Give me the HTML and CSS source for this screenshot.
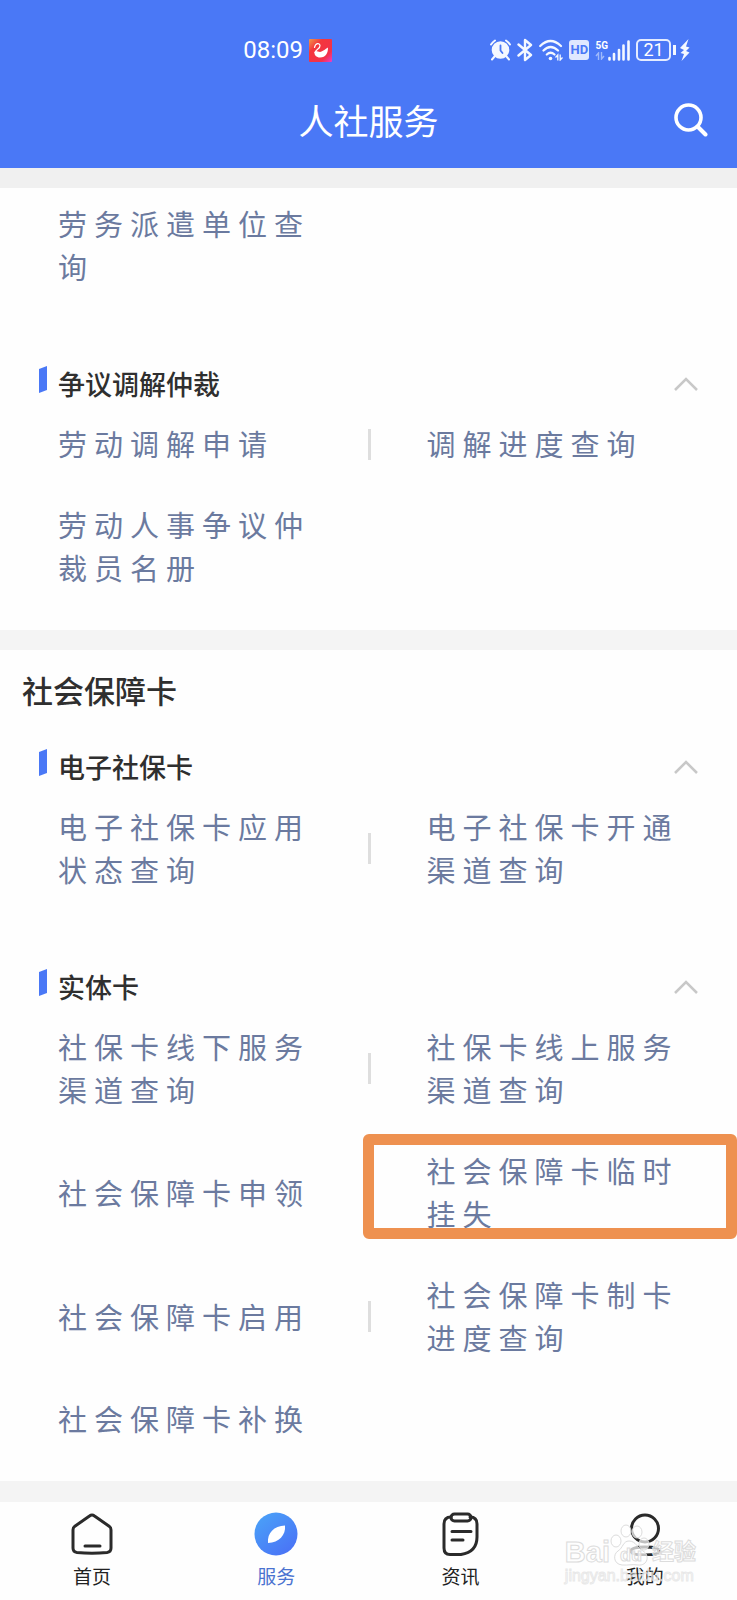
FILE: index.html
```html
<!DOCTYPE html>
<html lang="zh-CN">

<head>
    <meta charset="UTF-8">
    <meta name="viewport" content="width=device-width, initial-scale=1">
    <title>人社服务</title>
    <link rel="stylesheet" href="styles.css">
</head>
<body>
<header class="header">
    <div class="status">
        <div class="status-left">
            <span class="time">08:09</span>
            <svg width="23" height="23" viewBox="0 0 23 23">
                <defs>
                    <linearGradient id="swan" x1="0" y1="0" x2="1" y2="1">
                        <stop offset="0" stop-color="#f09a4c"/>
                        <stop offset=".3" stop-color="#f4373c"/>
                        <stop offset=".75" stop-color="#f2304a"/>
                        <stop offset="1" stop-color="#f03cc8"/>
                    </linearGradient>
                </defs>
                <rect width="23" height="23" rx="1" fill="url(#swan)"/>
                <path d="M5.500 8.500C6.500 4 10.500 3.500 11 6.500C11.500 9.500 6.500 10.500 6 13.500" fill="none" stroke="#fff" stroke-width="1.200" stroke-linecap="round"/>
                <path d="M5.500 13C7 10.500 10 14 12.500 12.500C14.500 11.500 16 10.500 19 8.500C19 14 17 18.500 11 18.500C7.500 18.500 5 16 5.500 13Z" fill="#fff"/>
            </svg>
        </div>
        <div class="status-right">
            <svg width="21" height="22" viewBox="0 0 21 22">
                <circle cx="10.500" cy="11" r="8.800" fill="#f4f8ff"/>
                <path d="M1 5.500A14 14 0 0 1 5 1.500M20 5.500A14 14 0 0 0 16 1.500M4.500 17.500L2 20.500M16.500 17.500L19 20.500" fill="none" stroke="#f4f8ff" stroke-width="2" stroke-linecap="round"/>
                <path d="M10.500 6.500V11.500L12.500 14" fill="none" stroke="#4a78f6" stroke-width="1.800" stroke-linecap="round"/>
            </svg>
            <svg width="16" height="24" viewBox="0 0 16 24">
                <path d="M1.500 6.500L14 17L8 22V2L14 7L1.500 17.500" fill="none" stroke="#f4f8ff" stroke-width="2.400" stroke-linejoin="round" stroke-linecap="round"/>
            </svg>
            <svg width="24" height="22" viewBox="0 0 24 22">
                <path d="M1.200 7Q11.500 -3 22 7M4.500 11.500Q11.500 4.500 19 11.500M7.800 15.500Q11.500 12 15.500 15.500" fill="none" stroke="#f4f8ff" stroke-width="2.200" stroke-linecap="round"/>
                <circle cx="11.500" cy="19.500" r="1.800" fill="#f4f8ff"/>
                <path d="M18.800 21.500V16L16.500 18.500M21.200 15.500V21L23.500 18.500" fill="none" stroke="#f4f8ff" stroke-width="1.300"/>
            </svg>
            <span class="hd">HD</span>
            <div class="signal">
                <div class="net">
                    <span>5G</span>
                    <svg width="10" height="8" viewBox="0 0 10 8">
                        <path d="M3.500 8V1L1 4M6.500 0V7L9 4" fill="none" stroke="#9fb9fb" stroke-width="1.400"/>
                    </svg>
                </div>
                <svg width="22" height="21" viewBox="0 0 22 21">
                    <path d="M1.500 18V19.500M6 14V19.500M11 10V19.500M15.500 5.500V19.500M20.500 1.500V19.500" stroke="#f4f8ff" stroke-width="2.600" stroke-linecap="round"/>
                </svg>
            </div>
            <div class="battery">
                <span>21</span>
                <i></i>
                <svg width="10" height="22" viewBox="0 0 10 22">
                    <path d="M8.500 0L0 9L4 11L0.500 14L4 15L1.500 22L9.500 13.500L6 12L9.500 8.500L6 7.500Z" fill="#f4f8ff"/>
                </svg>
            </div>
        </div>
    </div>
    <div class="titlebar">
        <h1>人社服务</h1>
        <button class="search" aria-label="搜索">
            <svg width="34" height="34" viewBox="0 0 34 34">
                <circle cx="14.500" cy="14.500" r="12.500" fill="none" stroke="#fff" stroke-width="3.600"/>
                <path d="M23.500 23.500L31.500 31.500" stroke="#fff" stroke-width="4" stroke-linecap="round"/>
            </svg>
        </button>
    </div>
</header>

<main>
    <section class="section continued">
        <div class="list">
            <a class="item" href="#">劳务派遣单位查询</a>
        </div>
        <div class="group">
            <h3>争议调解仲裁</h3>
            <button class="toggle" aria-label="收起"><svg width="26" height="15" viewBox="0 0 26 15"><path d="M2 13L13 2L24 13"/></svg></button>
        </div>
        <div class="list">
            <a class="item split" href="#">劳动调解申请</a>
            <a class="item" href="#">调解进度查询</a>
            <a class="item" href="#">劳动人事争议仲裁员名册</a>
        </div>
    </section>

    <section class="section">
        <h2>社会保障卡</h2>
        <div class="group">
            <h3>电子社保卡</h3>
            <button class="toggle" aria-label="收起"><svg width="26" height="15" viewBox="0 0 26 15"><path d="M2 13L13 2L24 13"/></svg></button>
        </div>
        <div class="list">
            <a class="item split" href="#">电子社保卡应用状态查询</a>
            <a class="item" href="#">电子社保卡开通渠道查询</a>
        </div>
        <div class="group">
            <h3>实体卡</h3>
            <button class="toggle" aria-label="收起"><svg width="26" height="15" viewBox="0 0 26 15"><path d="M2 13L13 2L24 13"/></svg></button>
        </div>
        <div class="list">
            <a class="item split" href="#">社保卡线下服务渠道查询</a>
            <a class="item" href="#">社保卡线上服务渠道查询</a>
            <a class="item" href="#">社会保障卡申领</a>
            <a class="item marked" href="#">社会保障卡临时挂失</a>
            <a class="item split" href="#">社会保障卡启用</a>
            <a class="item" href="#">社会保障卡制卡进度查询</a>
            <a class="item" href="#">社会保障卡补换</a>
        </div>
    </section>
</main>

<nav class="tabs">
    <a href="#">
        <svg width="44" height="44" viewBox="0 0 44 44" fill="none" stroke="#2a2a2a" stroke-width="3" stroke-linecap="round" stroke-linejoin="round">
            <path d="M19.500 4Q22 2 24.500 4L39.500 14.500Q41 15.500 41 18V36Q41 40 37 40.500Q22 42 7 40.500Q3 40 3 36V18Q3 15.500 4.500 14.500Z"/>
            <path d="M15 34H30"/>
        </svg>
        <span>首页</span>
    </a>
    <a href="#" class="active">
        <svg width="44" height="44" viewBox="0 0 44 44">
            <defs>
                <linearGradient id="compass" x1="0" y1="0" x2=".8" y2="1">
                    <stop offset="0" stop-color="#4aa5f8"/>
                    <stop offset="1" stop-color="#4a72f6"/>
                </linearGradient>
            </defs>
            <circle cx="22" cy="22" r="21.500" fill="url(#compass)"/>
            <path d="M31 13.500C32 23 25 30.500 14 31C13 21 20 14 31 13.500Z" fill="#fff"/>
        </svg>
        <span>服务</span>
    </a>
    <a href="#">
        <svg width="44" height="44" viewBox="0 0 44 44" fill="none" stroke="#2a2a2a" stroke-width="3" stroke-linecap="round" stroke-linejoin="round">
            <path d="M12 5Q5 5 5 12V36Q5 42.500 11 42.500H22Q38 40 38 25V12Q38 5 31 5"/>
            <rect x="12" y="2" width="20" height="7" rx="3.500"/>
            <path d="M13 19.500H32M13 28H24"/>
        </svg>
        <span>资讯</span>
    </a>
    <a href="#">
        <svg width="44" height="44" viewBox="0 0 44 44" fill="none" stroke="#2a2a2a" stroke-width="3">
            <circle cx="22" cy="16.500" r="13.500"/>
            <path d="M8 39Q8 35 22 35T36 39Q36 43 22 43T8 39Z"/>
        </svg>
        <span>我的</span>
    </a>
    <div class="watermark" aria-hidden="true">
        <div class="brand">
            <b>Bai</b>
            <svg width="42" height="42" viewBox="0 0 42 42" fill="#fff" fill-opacity=".7" stroke="#dcdcdc">
                <ellipse cx="6" cy="17" rx="5" ry="6"/>
                <ellipse cx="16" cy="7" rx="5" ry="6"/>
                <ellipse cx="27" cy="8" rx="5" ry="6"/>
                <ellipse cx="34" cy="20" rx="5" ry="6"/>
                <path d="M19 17C13 17 13 24 8 27C3 30 3 40 12 41C18 41.500 22 40 28 41C38 42 40 31 33 27C27 24 26 17 19 17Z"/>
                <text x="10" y="37" font-size="18" font-weight="bold">du</text>
            </svg>
            <em>经验</em>
        </div>
        <small>jingyan.baidu.com</small>
    </div>
</nav>
</body>

</html>
```
FILE: styles.css
```css
* {
    box-sizing: border-box;
}
body {
    margin: 0;
    background-color: #f4f4f4;
    color: #2f2f2f;
    font-family: "Noto Sans CJK SC", "Noto Sans", sans-serif;
}
h1, h2, h3 {
    margin: 0;
    font-weight: 500;
}
a {
    text-decoration: none;
}
button {
    display: flex;
    padding: 0;
    border: 0;
    background: none;
}
svg {
    display: block;
    flex: none;
}

/* header */
.header {
    border-bottom: 20px solid #f0f0f0;
    background-color: #4a78f6;
    background-clip: padding-box;
    color: #fff;
}
.status {
    display: flex;
    justify-content: space-between;
    padding: 38px 47px 0 33%;
    font-family: Roboto, sans-serif;
}
.status-left, .status-right {
    display: flex;
    align-items: center;
    height: 24px;
}
.status-left {
    gap: 6px;
}
.status-right {
    gap: 6px;
}
.time {
    font-size: 24px;
    line-height: 24px;
}
.hd {
    width: 20px;
    border-radius: 3px;
    background-color: #dfe8ff;
    color: #4a78f6;
    font-size: 13px;
    font-weight: 700;
    line-height: 20px;
    text-align: center;
}
.signal {
    display: flex;
    align-items: center;
}
.net {
    font-size: 10px;
    font-weight: 700;
    line-height: 12px;
}
.battery {
    display: flex;
    align-items: center;
    gap: 2px;
}
.battery span {
    width: 35px;
    border: 2px solid #e4ecff;
    border-radius: 5px;
    font-size: 18px;
    line-height: 18px;
    text-align: center;
}
.battery i {
    width: 3px;
    height: 10px;
    margin-right: 2px;
    background-color: #f4f8ff;
}
.titlebar {
    display: grid;
    grid-template-columns: 1fr auto 1fr;
    align-items: center;
    height: 106px;
    padding: 10px 29px 0;
}
.titlebar h1 {
    grid-column: 2;
    font-size: 35px;
    font-weight: 400;
    line-height: 48px;
}
.search {
    justify-self: end;
}

/* service sections */
.section {
    padding: 20px 0;
    background-color: #fefefe;
}
.section + .section {
    margin-top: 20px;
}
.continued {
    padding-top: 0;
}
.section h2 {
    margin-bottom: 38px;
    padding-left: 22px;
    font-size: 31px;
    line-height: 40px;
}
.group {
    display: flex;
    align-items: center;
    height: 38px;
    margin-bottom: 2px;
    padding: 0 38px 0 39px;
}
.group::before {
    align-self: flex-start;
    width: 8px;
    height: 27px;
    margin: 1px 11px 0 0;
    background-color: #4a78f6;
    clip-path: polygon(0 3px, 100% 0, 100% 24px, 0 100%);
    content: "";
}
.list + .group {
    margin-top: 56px;
}
.group h3 {
    flex: 1;
    font-size: 27px;
    line-height: 38px;
}
.toggle path {
    fill: none;
    stroke: #c8c8c8;
    stroke-width: 2.5;
}
.list {
    display: grid;
    grid-template-columns: 1fr 1fr;
}
.item {
    display: flex;
    position: relative;
    align-items: center;
    padding: 17px 48px 21px 58px;
    color: #6b7a9f;
    font-size: 29px;
    letter-spacing: 7px;
    line-height: 43px;
}
.continued .list:first-child .item {
    padding-top: 14px;
}
.split::after {
    position: absolute;
    top: calc(50% - 17px);
    right: -2px;
    width: 3px;
    height: 31px;
    background-color: #dedede;
    content: "";
}
.marked::after {
    position: absolute;
    top: 2px;
    right: 0;
    bottom: 17px;
    left: -6px;
    border: 11px solid #ee9150;
    border-radius: 6px;
    content: "";
}

/* bottom tabs */
.tabs {
    display: grid;
    position: relative;
    grid-template-columns: repeat(4, 1fr);
    margin-top: 21px;
    padding: 10px 0 4px;
    background-color: #fefefe;
}
.tabs a {
    display: flex;
    flex-direction: column;
    align-items: center;
    color: #222;
    font-size: 19px;
    line-height: 40px;
}
.tabs .active {
    color: #4a72d0;
}
.watermark {
    position: absolute;
    right: 41px;
    bottom: 14px;
    color: rgba(255, 255, 255, .7);
    font-family: "Liberation Sans", "Noto Sans CJK SC", sans-serif;
    pointer-events: none;
    -webkit-text-stroke: 1px #dcdcdc;
}
.brand {
    display: flex;
    align-items: flex-end;
    font-size: 29px;
    line-height: 28px;
}
.brand em {
    font-size: 22px;
    font-style: normal;
    font-weight: 700;
}
.watermark small {
    display: block;
    font-size: 16px;
    line-height: 20px;
    -webkit-text-stroke: 1px rgba(210, 210, 210, .5);
}
```
